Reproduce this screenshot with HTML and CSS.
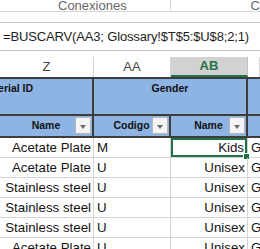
FILE: index.html
```html
<!DOCTYPE html>
<html>
<head>
<meta charset="utf-8">
<link rel="stylesheet" href="styles.css">
</head>
<body>
<div class="ribbon">
  <div class="group-label">Conexiones</div>
  <div class="group-sep"></div>
  <div class="group-label next">C</div>
</div>
<div class="ribbon-gap"></div>
<div class="formula-bar">=BUSCARV(AA3; Glossary!$T$5:$U$8;2;1)</div>
<div class="pre-sheet"></div>
<div class="sheet">
  <div class="col-heads">
    <div class="ch c-z">Z</div>
    <div class="ch c-aa">AA</div>
    <div class="ch c-ab selected">AB</div>
    <div class="ch c-rest"></div>
  </div>
  <div class="tbl-head row1">
    <div class="th c-z"><span class="clip-left">Material ID</span></div>
    <div class="th c-gender">Gender</div>
    <div class="th c-rest"></div>
  </div>
  <div class="tbl-head row2">
    <div class="th c-z center"><span>Name</span><span class="filter"></span></div>
    <div class="th c-aa center"><span>Codigo</span><span class="filter"></span></div>
    <div class="th c-ab center"><span>Name</span><span class="filter"></span></div>
    <div class="th c-rest"></div>
  </div>
  <div class="row">
    <div class="td c-z right">Acetate Plate</div>
    <div class="td c-aa">M</div>
    <div class="td c-ab right active">Kids<span class="handle"></span></div>
    <div class="td c-rest">G</div>
  </div>
  <div class="row">
    <div class="td c-z right">Acetate Plate</div>
    <div class="td c-aa">U</div>
    <div class="td c-ab right">Unisex</div>
    <div class="td c-rest">G</div>
  </div>
  <div class="row">
    <div class="td c-z right">Stainless steel</div>
    <div class="td c-aa">U</div>
    <div class="td c-ab right">Unisex</div>
    <div class="td c-rest">G</div>
  </div>
  <div class="row">
    <div class="td c-z right">Stainless steel</div>
    <div class="td c-aa">U</div>
    <div class="td c-ab right">Unisex</div>
    <div class="td c-rest">G</div>
  </div>
  <div class="row">
    <div class="td c-z right">Stainless steel</div>
    <div class="td c-aa">U</div>
    <div class="td c-ab right">Unisex</div>
    <div class="td c-rest">G</div>
  </div>
  <div class="row">
    <div class="td c-z right">Acetate Plate</div>
    <div class="td c-aa">U</div>
    <div class="td c-ab right">Unisex</div>
    <div class="td c-rest">G</div>
  </div>
</div>
</body>
</html>
```
FILE: styles.css
```css
* { box-sizing: border-box; }
html, body {
  margin: 0;
  padding: 0;
  width: 260px;
  height: 249px;
  overflow: hidden;
  background: #ffffff;
  font-family: "Liberation Sans", Arial, sans-serif;
  color: #1a1a1a;
}
.ribbon {
  height: 12px;
  border-bottom: 1px solid #d6d6d6;
  display: flex;
  align-items: flex-start;
  overflow: hidden;
}
.group-label {
  font-size: 13px;
  color: #666666;
  line-height: 11px;
  margin-left: 58px;
  width: 115px;
}
.group-label.next {
  margin-left: 80px;
  width: auto;
}
.group-sep {
  width: 1px;
  height: 10px;
  background: #d6d6d6;
}
.ribbon-gap {
  height: 11px;
  border-bottom: 1px solid #c4c4c4;
}
.formula-bar {
  height: 28px;
  border-bottom: 1px solid #c4c4c4;
  font-size: 13px;
  letter-spacing: -0.15px;
  line-height: 14px;
  padding: 7px 0 0 3px;
  white-space: nowrap;
  color: #1e1e1e;
  overflow: hidden;
}
.pre-sheet { height: 6px; }
.sheet { width: 260px; }
.col-heads, .tbl-head, .row {
  display: flex;
}
.c-z { width: 94px; flex: none; }
.c-aa { width: 77px; flex: none; }
.c-ab { width: 77px; flex: none; }
.c-gender { width: 154px; flex: none; }
.c-rest { flex: 1; }
.ch {
  height: 20px;
  border-right: 1px solid #d4d4d4;
  font-size: 13px;
  color: #444444;
  text-align: center;
  line-height: 20px;
}
.ch.selected {
  background: #d2d2d2;
  color: #217346;
  font-weight: bold;
  border-bottom: 2px solid #217346;
  line-height: 18px;
  border-right: 1px solid #c0c0c0;
}
.tbl-head {
  background: #8db4e2;
}
.row1 {
  height: 39px;
  border-top: 2px solid #3d3d3d;
  border-bottom: 2px solid #3d3d3d;
}
.row2 {
  height: 22px;
  border-bottom: 2px solid #3d3d3d;
}
.th {
  border-right: 2px solid #3d3d3d;
  font-size: 10.5px;
  font-weight: bold;
  color: #111111;
  padding-top: 3px;
  overflow: hidden;
  white-space: nowrap;
  position: relative;
}
.th.c-gender { text-align: center; padding-left: 0; }
.th.c-rest { border-right: none; }
.clip-left {
  display: inline-block;
  margin-left: -20px;
}
.th.center {
  display: flex;
  justify-content: center;
  align-items: center;
  padding-top: 0;
  padding-bottom: 2px;
}
.filter {
  position: absolute;
  right: 1px;
  top: 1px;
  width: 16px;
  height: 17px;
  background: #f4f4f4;
  border: 1px solid #b8b8b8;
}
.filter::after {
  content: "";
  position: absolute;
  left: 4px;
  top: 7px;
  border-left: 3.5px solid transparent;
  border-right: 3.5px solid transparent;
  border-top: 4px solid #6b6b6b;
}
.row {
  height: 20px;
  border-bottom: 1px solid #d4d4d4;
}
.td {
  height: 19px;
  border-right: 1px solid #d4d4d4;
  font-size: 13.3px;
  line-height: 19px;
  padding: 0 2px 0 3px;
  white-space: nowrap;
  overflow: hidden;
  color: #141414;
  position: relative;
}
.td.right { text-align: right; }
.td.c-rest { border-right: none; padding-left: 3px; }
.td.active {
  overflow: visible;
  box-shadow: inset 0 0 0 2px #217346;
  padding-right: 3px;
}
.handle {
  position: absolute;
  right: -3px;
  bottom: -3px;
  width: 5px;
  height: 5px;
  background: #217346;
  border: 1px solid #ffffff;
  box-sizing: content-box;
}
```
